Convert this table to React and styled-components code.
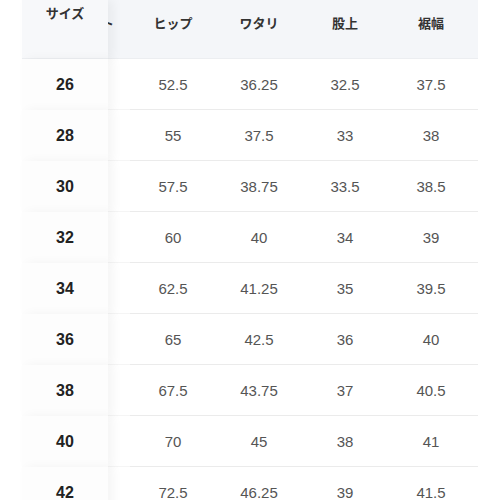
import styled, { createGlobalStyle } from "styled-components";

const GlobalStyle = createGlobalStyle`
  html, body {
    margin: 0;
    padding: 0;
    background: #ffffff;
  }
  body {
    font-family: "Liberation Sans", "Noto Sans CJK JP", sans-serif;
  }
`;

const Page = styled.div`
  width: 500px;
  height: 500px;
  overflow: hidden;
  padding-left: 22px;
  box-sizing: border-box;
`;

const Table = styled.div`
  display: grid;
  grid-template-columns: 86px 22px repeat(4, 86px) 4px;
  width: 456px;
`;

const HeadCell = styled.div`
  height: 59px;
  box-sizing: border-box;
  background: #f4f6f9;
  border-bottom: 1px solid #eceef1;
  display: flex;
  justify-content: center;
  align-items: ${(p) => (p.$top ? "flex-start" : "center")};
  padding-top: ${(p) => (p.$top ? "3px" : "0")};
  padding-bottom: ${(p) => (p.$top ? "0" : "14px")};
  font-family: "Noto Sans CJK JP", sans-serif;
  font-weight: 700;
  font-size: 13px;
  color: #333;
  white-space: nowrap;
  overflow: hidden;
`;

const StickyHead = styled(HeadCell)`
  background: #f7f8fa;
  position: relative;
  z-index: 1;
  box-shadow: 5px 0 10px rgba(0, 0, 0, 0.05);
`;

const ClippedHead = styled(HeadCell)`
  justify-content: flex-start;
`;

const ClippedText = styled.span`
  margin-left: -46px;
`;

const StickyCell = styled.div`
  height: 51px;
  box-sizing: border-box;
  background: #fdfdfd;
  display: flex;
  align-items: center;
  justify-content: center;
  position: relative;
  z-index: 1;
  box-shadow: 5px 0 10px rgba(0, 0, 0, 0.045);
  font-size: 16px;
  font-weight: 700;
  color: #222;
`;

const Cell = styled.div`
  height: 51px;
  box-sizing: border-box;
  border-bottom: 1px solid ${(p) => (p.$blank ? "#f5f5f5" : "#ebebeb")};
  display: flex;
  align-items: center;
  justify-content: center;
  font-size: 15px;
  color: #555;
`;

const headers = ["ヒップ", "ワタリ", "股上", "裾幅"];

const rows = [
  ["26", "52.5", "36.25", "32.5", "37.5"],
  ["28", "55", "37.5", "33", "38"],
  ["30", "57.5", "38.75", "33.5", "38.5"],
  ["32", "60", "40", "34", "39"],
  ["34", "62.5", "41.25", "35", "39.5"],
  ["36", "65", "42.5", "36", "40"],
  ["38", "67.5", "43.75", "37", "40.5"],
  ["40", "70", "45", "38", "41"],
  ["42", "72.5", "46.25", "39", "41.5"],
];

export default function App() {
  return (
    <Page>
      <GlobalStyle />
      <Table>
        <StickyHead $top>サイズ</StickyHead>
        <ClippedHead>
          <ClippedText>ウエスト</ClippedText>
        </ClippedHead>
        {headers.map((h) => (
          <HeadCell key={h}>{h}</HeadCell>
        ))}
        <HeadCell />
        {rows.map(([size, ...vals]) => (
          <>
            <StickyCell key={size + "s"}>{size}</StickyCell>
            <Cell key={size + "b"} $blank />
            {vals.map((v, i) => (
              <Cell key={size + i}>{v}</Cell>
            ))}
            <Cell key={size + "e"} />
          </>
        ))}
      </Table>
    </Page>
  );
}
